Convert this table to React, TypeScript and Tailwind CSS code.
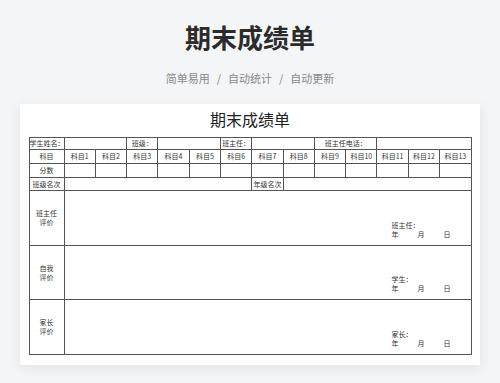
import React from 'react';

const subjects = Array.from({ length: 13 }, (_, i) => `科目${i + 1}`);

const evalRows = [
  { label: ['班主任', '评价'], sign: '班主任：' },
  { label: ['自我', '评价'], sign: '学生：' },
  { label: ['家长', '评价'], sign: '家长：' },
];

const base = 'border border-[#555] p-0 text-center whitespace-nowrap overflow-hidden';
const cell = `${base} align-middle`;

const App: React.FC = () => {
  return (
    <div
      className="min-h-screen bg-[#f4f5f7] pt-[19px] pb-5 text-[#333]"
      style={{ fontFamily: '"Noto Sans CJK SC", "Noto Sans", sans-serif' }}
    >
      {/* Header */}
      <h1 className="text-center text-[26px] leading-[36px] font-bold text-[#2b2b2b]">期末成绩单</h1>
      <p className="mt-[14px] flex justify-center text-[11px] leading-[18px] text-[#8a8a8a]">
        <span>简单易用</span>
        <span className="mx-[7px]">/</span>
        <span>自动统计</span>
        <span className="mx-[7px]">/</span>
        <span>自动更新</span>
      </p>

      {/* Sheet card */}
      <div className="mx-[20px] mt-[17px] bg-white px-[8.5px] pt-[5px] pb-[10px] shadow-[0_3px_12px_rgba(0,0,0,0.08)]">
        <h2 className="mb-[8px] text-center text-[16px] leading-[20px] text-[#222]">期末成绩单</h2>

        <table className="w-full table-fixed border-collapse text-[7px] leading-[9px] text-[#333]">
          <colgroup>
            <col className="w-[35px]" />
            {subjects.map((s) => (
              <col key={s} />
            ))}
          </colgroup>
          <tbody>
            <tr className="h-[12px]">
              <td className={cell}>学生姓名：</td>
              <td className={cell} colSpan={2}></td>
              <td className={cell}>班级：</td>
              <td className={cell} colSpan={2}></td>
              <td className={cell}>班主任：</td>
              <td className={cell} colSpan={2}></td>
              <td className={cell} colSpan={2}>班主任电话：</td>
              <td className={cell} colSpan={3}></td>
            </tr>
            <tr className="h-[14px]">
              <td className={cell}>科目</td>
              {subjects.map((s) => (
                <td key={s} className={cell}>
                  {s}
                </td>
              ))}
            </tr>
            <tr className="h-[14px]">
              <td className={cell}>分数</td>
              {subjects.map((s) => (
                <td key={s} className={cell}></td>
              ))}
            </tr>
            <tr className="h-[13px]">
              <td className={cell}>班级名次</td>
              <td className={cell} colSpan={6}></td>
              <td className={cell}>年级名次</td>
              <td className={cell} colSpan={6}></td>
            </tr>
            {evalRows.map((r, i) => (
              <tr key={r.sign} className={i === 1 ? 'h-[54px]' : 'h-[55px]'}>
                <td className={cell}>
                  {r.label.map((l) => (
                    <div key={l}>{l}</div>
                  ))}
                </td>
                <td className={`${base} align-bottom`} colSpan={13}>
                  <div className="flex justify-end pr-[20px] pb-[6px]">
                    <div className="text-left">
                      <div>{r.sign}</div>
                      <div className="flex">
                        <span className="w-[26px]">年</span>
                        <span className="w-[26px]">月</span>
                        <span>日</span>
                      </div>
                    </div>
                  </div>
                </td>
              </tr>
            ))}
          </tbody>
        </table>
      </div>
    </div>
  );
};

export default App;
